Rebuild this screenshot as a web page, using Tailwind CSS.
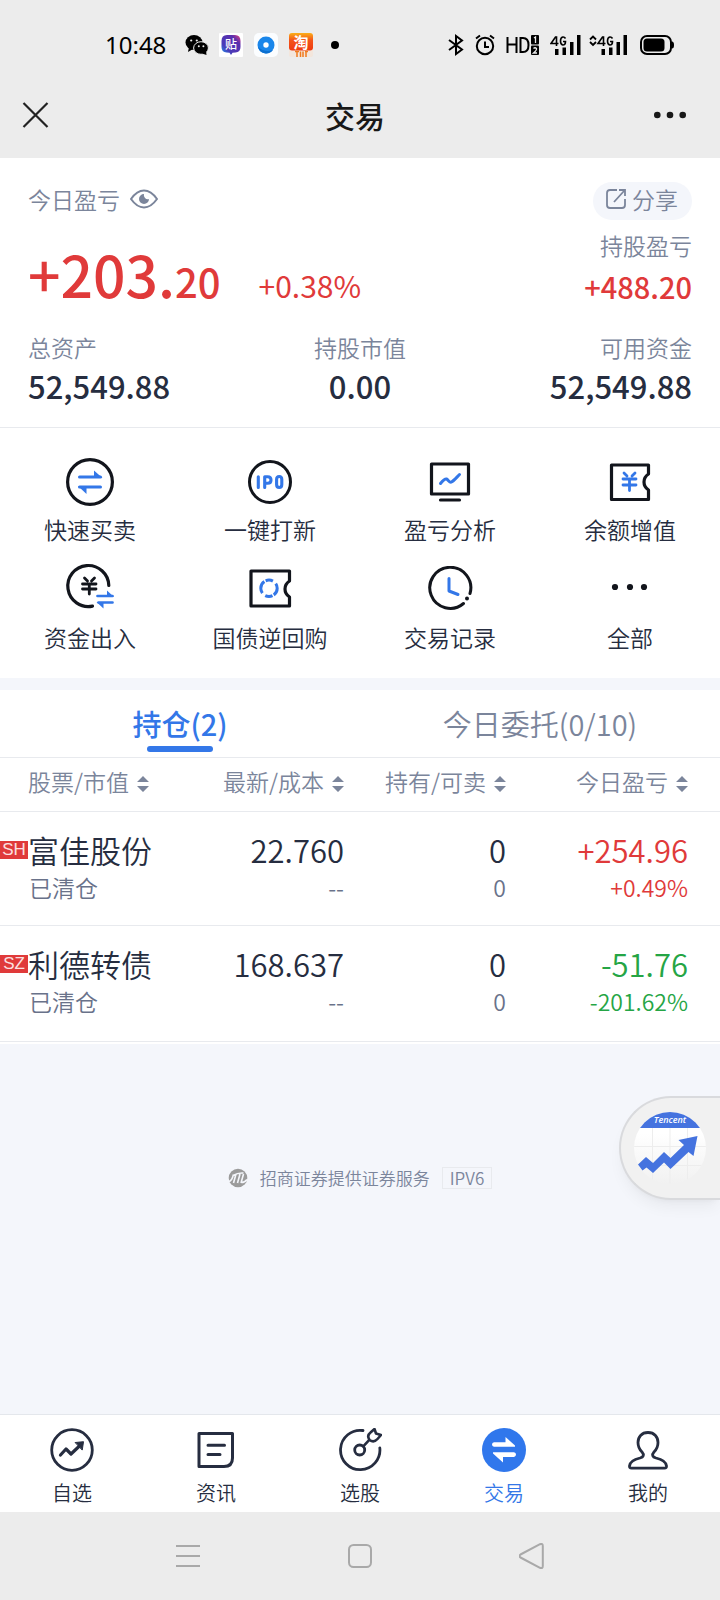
<!DOCTYPE html>
<html lang="zh-CN">

<head>
  <meta charset="UTF-8">
  <meta name="viewport" content="width=device-width, initial-scale=1.0">
  <title>交易</title>
  <script src="https://cdn.jsdelivr.net/npm/@tailwindcss/browser@4"></script>
</head>

<body class="bg-[#f4f6fb] font-['Noto_Sans_CJK_SC',sans-serif] font-[350] text-[#262d40]">
  <div class="relative flex min-h-screen flex-col">

    <!-- Status bar -->
    <div class="flex h-[72px] items-center justify-between bg-[#ececec] pt-[18px] pr-[46px] pl-[105px] text-black">
      <div class="flex items-center">
        <span class="w-[80px] font-['Noto_Sans',sans-serif] text-[24px] leading-8 font-normal">10:48</span>
        <svg class="h-6 w-6" viewBox="0 0 24 24">
          <ellipse cx="9" cy="9.500" rx="8.500" ry="7.500" />
          <path d="M3 19l1-5 4 2z" />
          <ellipse cx="16" cy="15" rx="7.400" ry="6.300" stroke="#ececec" stroke-width="1" />
          <path d="M21.500 22l-.5-4-4 2.500z" />
          <g fill="#ececec"><circle cx="6.200" cy="7.500" r="1.100" /><circle cx="11.800" cy="7.500" r="1.100" /><circle cx="13.800" cy="13.200" r="1" /><circle cx="18.400" cy="13.200" r="1" /></g>
        </svg>
        <svg class="ml-[10px] h-6 w-6" viewBox="0 0 24 24">
          <defs>
            <linearGradient id="tieba" x1="0" y1="1" x2="1" y2="0"><stop offset="0" stop-color="#18a0f5" /><stop offset=".3" stop-color="#4a3bb8" /><stop offset=".75" stop-color="#5a2fae" /><stop offset="1" stop-color="#f0447a" /></linearGradient>
          </defs>
          <rect width="24" height="24" rx="1" fill="#fff" />
          <path d="M8 2h8q5.500 0 5.500 6v6q0 5-5 5.500l-3 .3-1.500 2.200-1.500-2.200-3-.3q-5-.5-5-5.500V8q0-6 5.500-6z" fill="url(#tieba)" />
          <text x="12" y="15.500" font-size="12" font-weight="500" text-anchor="middle" fill="#fff">贴</text>
        </svg>
        <svg class="ml-[11px] h-6 w-6" viewBox="0 0 24 24">
          <rect width="24" height="24" rx="5" fill="#fbfdff" />
          <circle cx="12" cy="12" r="8.500" fill="#1a86ea" />
          <path d="M4 14a8.500 8.500 0 0 0 15 3q-8 3-15-3z" fill="#0b6fd0" />
          <circle cx="12" cy="12" r="2.700" fill="#fff" />
        </svg>
        <svg class="ml-[11px] h-6 w-6 overflow-visible" viewBox="0 0 24 24">
          <defs>
            <linearGradient id="tao" x1="0" y1="0" x2="0" y2="1"><stop offset="0" stop-color="#fbb018" /><stop offset=".4" stop-color="#f4551a" /><stop offset="1" stop-color="#ee3a10" /></linearGradient>
          </defs>
          <rect width="24" height="24" rx="2" fill="#f3e6dc" />
          <rect width="24" height="17.500" rx="3" fill="url(#tao)" />
          <text x="12" y="15" font-size="15" font-weight="700" text-anchor="middle" fill="#fff">淘</text>
          <path d="M6 18.500h4M8 18.500V24M11.500 18.500V24M14 18.500V24M17 18.500V24M16 18.500h3" stroke="#f07a1c" stroke-width="1.500" />
        </svg>
        <svg class="ml-[18px] h-2 w-2" viewBox="0 0 8 8"><circle cx="4" cy="4" r="4" /></svg>
      </div>
      <div class="flex items-center">
        <svg class="h-[22px] w-4" viewBox="0 0 16 22" fill="none" stroke="#000" stroke-width="2">
          <path d="M1 6l13 9.500-6 4.500V2l6 4.500L1 16" />
        </svg>
        <svg class="ml-[11px] h-[22px] w-5" viewBox="0 0 20 22" fill="none" stroke="#000" stroke-width="2">
          <circle cx="10" cy="12" r="8.200" />
          <path d="M10 7.500V13h4M1 4.500L5 1.500M19 4.500L15 1.500" />
        </svg>
        <svg class="ml-[10px] h-[22px] w-[34px]" viewBox="0 0 34 22">
          <path d="M2.500 3v16M11.500 3v16M2.500 10.500h9M15.500 4v14h2.500q5.500 0 5.500-7t-5.500-7z" fill="none" stroke="#000" stroke-width="2" />
          <rect x="26" y="1" width="8" height="9.500" rx="1" /><rect x="26" y="11.500" width="8" height="9.500" rx="1" />
          <path d="M29 4l1.500-1v6M28.500 14.500q1.500-1.500 3 0 .5 1.500-3 4.500h3.500" fill="none" stroke="#ececec" stroke-width="1.300" />
        </svg>
        <svg class="ml-[11px] h-[22px] w-8" viewBox="0 0 32 22">
          <path d="M6.500 12V3h-1L1 9.500h7.500M15.500 4.500q-1-1.700-2.700-1.500-2.300.5-2.300 4t2.300 4q2.700 0 2.700-3.500h-2.500" fill="none" stroke="#000" stroke-width="1.600" />
          <path d="M5 15h3.500v6H5zM12.500 13.500H16V21h-3.500zM20 8h3.500v13H20zM27 1h3.500v20H27z" />
        </svg>
        <svg class="ml-[7px] h-[22px] w-10" viewBox="0 0 40 22">
          <path d="M1 5.500L4 2.500l3 3M1 8l3 3 3-3" fill="none" stroke="#000" stroke-width="1.800" />
          <path d="M14.500 12V3h-1L9 9.500h7.500M23.500 4.500q-1-1.700-2.700-1.500-2.300.5-2.300 4t2.300 4q2.700 0 2.700-3.500h-2.500" fill="none" stroke="#000" stroke-width="1.600" />
          <path d="M12.500 15H16v6h-3.500zM20 13.500h3.500V21H20zM27.500 8H31v13h-3.500zM34.500 1H38v20h-3.500z" />
        </svg>
        <svg class="ml-[11px] h-[22px] w-[34px]" viewBox="0 0 34 22">
          <rect x="1" y="2" width="30" height="18" rx="6" fill="none" stroke="#000" stroke-width="2" />
          <rect x="3.500" y="4.500" width="21" height="13" rx="3.500" />
          <path d="M32 7.500q2 0 2 3.500t-2 3.500z" />
        </svg>
      </div>
    </div>

    <!-- Title bar -->
    <header class="flex h-[86px] items-center justify-between bg-[#ececec] px-[22px] text-[#181818]">
      <button type="button" aria-label="关闭" class="w-[50px]">
        <svg class="h-7 w-7" viewBox="0 0 28 28" fill="none" stroke="#222" stroke-width="2.200"><path d="M1.500 2l24 24M25.500 2l-24 24" /></svg>
      </button>
      <h1 class="text-[30px] leading-[42px] font-medium">交易</h1>
      <button type="button" aria-label="更多" class="flex w-[60px] justify-end pr-[12px]">
        <svg class="h-2 w-8" viewBox="0 0 32 8" fill="#181818"><circle cx="3.300" cy="4" r="3.300" /><circle cx="16" cy="4" r="3.300" /><circle cx="28.700" cy="4" r="3.300" /></svg>
      </button>
    </header>

    <!-- Account summary -->
    <section class="border-b border-[#e8eaee] bg-white px-7 pt-6 pb-5 text-[23px] text-[#7b859b]">
      <div class="flex h-[38px] items-center justify-between">
        <div class="flex items-center gap-[10px] pb-1 leading-9">
          今日盈亏
          <svg class="h-6 w-7" viewBox="0 0 28 24">
            <path d="M1 12Q7 3.500 14 3.500T27 12Q21 20.500 14 20.500T1 12z" fill="none" stroke="#7b859b" stroke-width="2" />
            <path d="M14 7a5 5 0 1 0 5 5 4 4 0 0 1-5-5z" fill="#7b859b" />
          </svg>
        </div>
        <button type="button" class="flex h-[38px] items-center gap-[5px] rounded-full bg-[#f4f6fb] pr-[14px] pb-1 pl-3">
          <svg class="h-6 w-[22px]" viewBox="0 0 22 24" fill="none" stroke="#7b859b" stroke-width="1.800">
            <path d="M12 3H5Q2 3 2 6v12q0 3 3 3h12q3 0 3-3v-6M9 15L19 4M14 3h6v6" />
          </svg>
          <span class="leading-9">分享</span>
        </button>
      </div>
      <div class="mt-[7px] flex items-end justify-between text-[#e03a3a]">
        <div class="flex items-baseline">
          <span class="text-[57px] leading-[72px] font-medium">+203.<span class="text-[40px] leading-none">20</span></span>
          <span class="ml-[38px] text-[30px] leading-none font-normal">+0.38%</span>
        </div>
        <div class="text-right">
          <div class="leading-9 text-[#7b859b]">持股盈亏</div>
          <div class="text-[29px] leading-[46px] font-medium">+488.20</div>
        </div>
      </div>
      <dl class="mt-5 grid grid-cols-3">
        <div>
          <dt class="leading-9">总资产</dt>
          <dd class="text-[31px] leading-[42px] font-medium text-[#262d40]">52,549.88</dd>
        </div>
        <div class="text-center">
          <dt class="leading-9">持股市值</dt>
          <dd class="text-[31px] leading-[42px] font-medium text-[#262d40]">0.00</dd>
        </div>
        <div class="text-right">
          <dt class="leading-9">可用资金</dt>
          <dd class="text-[31px] leading-[42px] font-medium text-[#262d40]">52,549.88</dd>
        </div>
      </dl>
    </section>

    <!-- Shortcuts -->
    <section class="grid grid-cols-4 gap-y-[19px] bg-white pt-[30px] pb-[23px] text-[23px] leading-9">
      <a href="#" class="flex flex-col items-center gap-[5px]">
        <svg class="h-12 w-12" viewBox="0 0 48 48" fill="none">
          <circle cx="24" cy="24" r="22.400" stroke="#12151c" stroke-width="3.200" />
          <path d="M13.500 19h21M34.500 29h-21" stroke="#3377e8" stroke-width="3" stroke-linecap="round" />
          <path d="M28 12.500l8.500 7.500H28zM20.500 36L12 28h8.500z" fill="#3377e8" />
        </svg>
        快速买卖
      </a>
      <a href="#" class="flex flex-col items-center gap-[5px]">
        <svg class="h-12 w-12" viewBox="0 0 48 48" fill="none">
          <circle cx="24" cy="24" r="20.500" stroke="#12151c" stroke-width="3" />
          <path d="M12.300 18.700v10.800M18.700 29.500V18.700h3q3.300 0 3.300 3.300t-3.300 3.300h-3M33.200 18.500q2.600 0 2.600 3v5q0 3-2.600 3t-2.600-3v-5q0-3 2.600-3z" stroke="#3377e8" stroke-width="3.100" stroke-linecap="round" stroke-linejoin="round" />
        </svg>
        一键打新
      </a>
      <a href="#" class="flex flex-col items-center gap-[5px]">
        <svg class="h-12 w-12" viewBox="0 0 48 48" fill="none" stroke-linecap="round" stroke-linejoin="round">
          <path d="M5.500 6h37v30h-37zM14.500 42h19" stroke="#12151c" stroke-width="3.200" />
          <path d="M14.500 25.500q4-5 6-4.500c1.500.5 3 4 5 3s5-4.500 8-7.500" stroke="#3377e8" stroke-width="3" />
        </svg>
        盈亏分析
      </a>
      <a href="#" class="flex flex-col items-center gap-[5px]">
        <svg class="h-12 w-12" viewBox="0 0 48 48" fill="none" stroke-linecap="round" stroke-linejoin="round">
          <path d="M5.500 7h37v9c-6 4-6 12 0 16v9.500h-37z" stroke="#12151c" stroke-width="3.200" />
          <path d="M18 15l3 3M29 15l-3 3M17 21h13M17 27h13M23.500 21v11.500" stroke="#3377e8" stroke-width="2.800" />
        </svg>
        余额增值
      </a>
      <a href="#" class="flex flex-col items-center gap-[5px]">
        <svg class="h-12 w-12 overflow-visible" viewBox="0 0 48 48" fill="none" stroke-linecap="round">
          <path d="M42.800 19.500A20.500 20.500 0 1 0 26.500 40.100" stroke="#12151c" stroke-width="3.200" />
          <path d="M18.500 12l3 3M28.500 12l-3 3M16.500 18h13.500M16.500 23h13.500M23.300 18v10" stroke="#12151c" stroke-width="2.800" />
          <path d="M31.500 30h15M46.500 36.500h-14" stroke="#3377e8" stroke-width="2.700" />
          <path d="M41 24.500l7 6.500h-7zM37.500 42.500l-7-6.500h7z" fill="#3377e8" />
        </svg>
        资金出入
      </a>
      <a href="#" class="flex flex-col items-center gap-[5px]">
        <svg class="h-12 w-12" viewBox="0 0 48 48" fill="none" stroke-linecap="round" stroke-linejoin="round">
          <path d="M5 5h38.500v10c-6 4-6 12 0 16v9H5z" stroke="#12151c" stroke-width="3.200" />
          <circle cx="23" cy="22.300" r="8.200" stroke="#3377e8" stroke-width="3" stroke-linecap="butt" stroke-dasharray="13 1.500 7.500 3.760" stroke-dashoffset="5.300" />
        </svg>
        国债逆回购
      </a>
      <a href="#" class="flex flex-col items-center gap-[5px]">
        <svg class="h-12 w-12" viewBox="0 0 48 48" fill="none" stroke-linecap="round" stroke-linejoin="round">
          <path d="M44 27.500A20.500 20.500 0 1 0 37.500 37.500" stroke="#12151c" stroke-width="3" />
          <circle cx="41" cy="32.500" r="2" fill="#12151c" />
          <path d="M23 12.500V25l9 3.500" stroke="#3377e8" stroke-width="3" />
        </svg>
        交易记录
      </a>
      <a href="#" class="flex flex-col items-center gap-[5px]">
        <svg class="h-12 w-12" viewBox="0 0 48 48" fill="#12151c">
          <circle cx="9" cy="21" r="3.100" /><circle cx="24" cy="21" r="3.100" /><circle cx="38" cy="21" r="3.100" />
        </svg>
        全部
      </a>
    </section>

    <!-- Holdings -->
    <section class="mt-3 bg-white pb-[2px]">
      <div role="tablist" class="grid grid-cols-2 border-b border-[#e8eaee] text-[29px] leading-[42px]">
        <button type="button" role="tab" aria-selected="true" class="flex flex-col items-center pt-3 pb-[5px] font-medium text-[#3377e8]">
          持仓(2)
          <span class="mt-[2px] h-[6px] w-[66px] rounded-sm bg-[#3377e8]"></span>
        </button>
        <button type="button" role="tab" aria-selected="false" class="flex flex-col items-center pt-3 text-[#7b859b]">今日委托(0/10)</button>
      </div>

      <table class="w-full table-fixed text-right">
        <thead class="text-[23px] leading-9 text-[#7b859b]">
          <tr class="h-[53px] border-b border-[#e8eaee]">
            <th class="w-[172px] pb-[6px] pl-7 font-[350]">
              <div class="flex items-center gap-2">股票/市值<svg class="h-[22px] w-3" viewBox="0 0 12 22" fill="#7b859b"><path d="M0 12l6-6 6 6zM0 16h12l-6 6z" /></svg></div>
            </th>
            <th class="w-[172px] pb-[6px] font-[350]">
              <div class="flex items-center justify-end gap-2">最新/成本<svg class="h-[22px] w-3" viewBox="0 0 12 22" fill="#7b859b"><path d="M0 12l6-6 6 6zM0 16h12l-6 6z" /></svg></div>
            </th>
            <th class="w-[162px] pb-[6px] font-[350]">
              <div class="flex items-center justify-end gap-2">持有/可卖<svg class="h-[22px] w-3" viewBox="0 0 12 22" fill="#7b859b"><path d="M0 12l6-6 6 6zM0 16h12l-6 6z" /></svg></div>
            </th>
            <th class="pr-8 pb-[6px] font-[350]">
              <div class="flex items-center justify-end gap-2">今日盈亏<svg class="h-[22px] w-3" viewBox="0 0 12 22" fill="#7b859b"><path d="M0 12l6-6 6 6zM0 16h12l-6 6z" /></svg></div>
            </th>
          </tr>
        </thead>
        <tbody class="text-[31px] leading-[42px]">
          <tr class="border-b border-[#e8eaee]">
            <td class="pt-[17px] pb-[22px] text-left">
              <div class="flex items-center whitespace-nowrap">
                <span class="flex h-[18px] w-7 items-center justify-center bg-[#e03a3a] font-['Liberation_Sans',sans-serif] text-[17px] text-[#fbe0e0]">SH</span>富佳股份
              </div>
              <div class="pl-[29px] text-[23px] leading-8 text-[#69728a]">已清仓</div>
            </td>
            <td class="pt-[17px] pb-[22px]">22.760<div class="text-[23px] leading-8 text-[#69728a]">--</div></td>
            <td class="pt-[17px] pb-[22px]">0<div class="text-[23px] leading-8 text-[#69728a]">0</div></td>
            <td class="pt-[17px] pr-8 pb-[22px] text-[#e03a3a]">+254.96<div class="text-[23px] leading-8">+0.49%</div></td>
          </tr>
          <tr class="border-b border-[#e8eaee]">
            <td class="pt-[17px] pb-6 text-left">
              <div class="flex items-center whitespace-nowrap">
                <span class="flex h-[18px] w-7 items-center justify-center bg-[#e03a3a] font-['Liberation_Sans',sans-serif] text-[17px] text-[#fbe0e0]">SZ</span>利德转债
              </div>
              <div class="pl-[29px] text-[23px] leading-8 text-[#69728a]">已清仓</div>
            </td>
            <td class="pt-[17px] pb-6">168.637<div class="text-[23px] leading-8 text-[#69728a]">--</div></td>
            <td class="pt-[17px] pb-6">0<div class="text-[23px] leading-8 text-[#69728a]">0</div></td>
            <td class="pt-[17px] pr-8 pb-6 text-[#25a545]">-51.76<div class="text-[23px] leading-8">-201.62%</div></td>
          </tr>
        </tbody>
      </table>
    </section>

    <!-- Broker note -->
    <div class="flex flex-1 items-start justify-center pt-[123px] text-[17px] leading-[20px] text-[#7b859b]">
      <div class="flex items-center">
        <svg class="h-5 w-5" viewBox="0 0 20 20">
          <circle cx="10" cy="10" r="9.300" fill="#9b9b9b" />
          <path d="M1 13.500q3-1 4.500-7M5.500 15L8 6M9.500 15L12 6M13 15l2.500-9M5 7.500q5-3 10.500-2.500M13 14.500q4 0 6-3" fill="none" stroke="#f4f6fb" stroke-width="1.600" />
        </svg>
        <span class="ml-3">招商证券提供证券服务</span>
        <span class="ml-3 border border-[#e8eaee] px-[7px]">IPV6</span>
      </div>
    </div>

    <!-- Floating entry -->
    <button type="button" aria-label="腾讯自选股" class="absolute top-[1096px] right-0 flex h-[104px] w-[101px] items-center rounded-l-full border-2 border-r-0 border-[#d9dadd] bg-[#f1f1f1] pl-[13px] shadow-lg shadow-black/5">
      <svg class="h-[72px] w-[72px]" viewBox="0 0 72 72">
        <defs>
          <clipPath id="disc"><circle cx="36" cy="36" r="36" /></clipPath>
          <linearGradient id="fade" x1="0" y1="0" x2="0" y2="1"><stop offset=".3" stop-color="#fff" /><stop offset="1" stop-color="#f1f1f1" /></linearGradient>
        </defs>
        <g clip-path="url(#disc)">
          <rect width="72" height="72" fill="url(#fade)" />
          <path d="M18.500 16v56M36 16v56M53.500 16v56M0 34.500h72M0 53.500h72" stroke="#ededed" />
          <rect width="72" height="16" fill="#4573df" />
        </g>
        <text x="36" y="11" font-size="9" font-style="italic" font-weight="600" font-family="Open Sans, sans-serif" text-anchor="middle" fill="#fff">Tencent</text>
        <path d="M4 52.500L12 45l7 6 11-11 6.500 6L50 33l-5.500-5L63.500 24l-4 20-5-4L36.500 57 30 50.500 19 61l-6.500-5.500L8.500 58.500z" fill="#4573df" />
      </svg>
    </button>

    <!-- Bottom tabs -->
    <nav class="grid grid-cols-5 border-t border-[#e4e7ec] bg-white pt-[13px] pb-[5px] text-[20px] leading-7">
      <a href="#" class="flex flex-col items-center gap-[7px]">
        <svg class="h-11 w-11" viewBox="0 0 44 44" fill="none" stroke="#262d40" stroke-width="2.800" stroke-linecap="round" stroke-linejoin="round">
          <circle cx="22" cy="22" r="20.300" />
          <path d="M10.500 27l5.500-6 5 5L30 17.500" stroke-width="3.200" />
          <path d="M25.500 14.500l8-.8-1.200 8z" fill="#262d40" stroke-width="1" />
        </svg>
        自选
      </a>
      <a href="#" class="flex flex-col items-center gap-[7px]">
        <svg class="h-11 w-11" viewBox="0 0 44 44" fill="none" stroke="#262d40" stroke-width="3" stroke-linecap="round" stroke-linejoin="round">
          <path d="M5 5.500h33.500V30q0 8.500-8.500 8.500H5zM14 17.200h16.500M14 26.500h12" />
        </svg>
        资讯
      </a>
      <a href="#" class="flex flex-col items-center gap-[7px]">
        <svg class="h-11 w-11" viewBox="0 0 44 44" fill="none" stroke="#262d40" stroke-width="2.800" stroke-linecap="round" stroke-linejoin="round">
          <path d="M25 2.500A19.700 19.700 0 1 0 41.800 19.800" />
          <circle cx="21.700" cy="22" r="5" />
          <path d="M25.500 18.200l6-6.500M31.500 12q-3-4.500 1-7.500l4-3.500 1.500 4.500 5 1.500-3.500 4q-3.500 4-8 1z" stroke-width="2.600" />
        </svg>
        选股
      </a>
      <a href="#" aria-current="page" class="flex flex-col items-center gap-[7px] text-[#3377e8]">
        <svg class="h-11 w-11" viewBox="0 0 44 44">
          <circle cx="22" cy="22" r="22" fill="#3077ec" />
          <path d="M12 14.200h11.500V9l9.500 8.500v1.300H12q-2-.3-2-2.300t2-2.300zM32 29h-11v5.500L11 25.500v-1.200h21q2 .3 2 2.300t-2 2.400z" fill="#fff" />
        </svg>
        交易
      </a>
      <a href="#" class="flex flex-col items-center gap-[7px]">
        <svg class="h-11 w-11" viewBox="0 0 44 44" fill="none" stroke="#262d40" stroke-width="2.800" stroke-linejoin="round">
          <path d="M22 4.500c6.500 0 10 4.500 10 10 0 4-1.500 7-4 9.500-2.500 2.800-1.500 5 2 6 7 1.500 10 4 10.500 8 .2 1.500-.5 2.200-2 2.200h-33c-1.500 0-2.200-.7-2-2.200.5-4 3.500-6.500 10.500-8 3.500-1 4.500-3.200 2-6-2.500-2.500-4-5.500-4-9.500 0-5.500 3.500-10 10-10z" />
        </svg>
        我的
      </a>
    </nav>

    <!-- System navigation -->
    <div class="flex h-[88px] items-center justify-center gap-[146px] bg-[#ececec]">
      <button type="button" aria-label="最近任务">
        <svg class="h-[26px] w-[26px]" viewBox="0 0 26 26" stroke="#a9a9a9" stroke-width="2"><path d="M1 3h24M1 13h24M1 23h24" /></svg>
      </button>
      <button type="button" aria-label="主屏幕">
        <svg class="h-[26px] w-[26px]" viewBox="0 0 26 26" fill="none" stroke="#a9a9a9" stroke-width="2"><rect x="2" y="2" width="22" height="22" rx="4.500" /></svg>
      </button>
      <button type="button" aria-label="返回">
        <svg class="h-[26px] w-[26px]" viewBox="0 0 26 26" fill="none" stroke="#a9a9a9" stroke-width="2" stroke-linejoin="round"><path d="M1.500 11.500L21 1.200q2.800-1 2.800 1.800v20q0 2.800-2.800 1.800L1.500 14.500q-2-1.500 0-3z" /></svg>
      </button>
    </div>
  </div>
</body>

</html>
